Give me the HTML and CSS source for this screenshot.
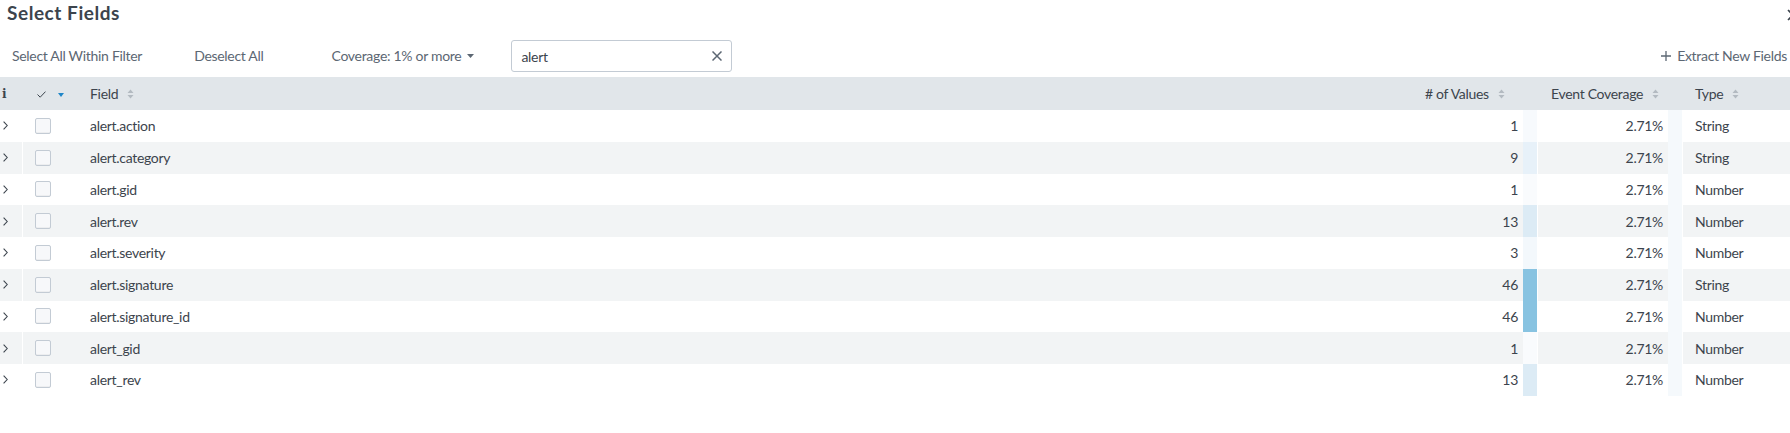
FILE: index.html
```html
<!DOCTYPE html>
<html lang="en">
<head>
<meta charset="utf-8">
<title>Select Fields</title>
<link rel="stylesheet" href="styles.css">
</head>
<body>
<div class="page">
  <div class="title-bar">
    <h1 class="title">Select Fields</h1>
    <button class="close" aria-label="Close">
      <svg width="12" height="12" viewBox="0 0 12 12"><path d="M1 1 L11 11 M11 1 L1 11" stroke="#3c444d" stroke-width="1.6" fill="none"/></svg>
    </button>
  </div>

  <div class="toolbar">
    <button class="tb-btn tb-select">Select All Within Filter</button>
    <button class="tb-btn tb-deselect">Deselect All</button>
    <button class="tb-btn tb-coverage">Coverage: 1% or more<svg class="dd-caret" width="7" height="4" viewBox="0 0 7 4"><path d="M0 0 H7 L3.5 4 Z" fill="#5c6773"/></svg></button>
    <div class="search">
      <span class="search-text">alert</span>
      <svg class="search-clear" width="10" height="10" viewBox="0 0 10 10"><path d="M0.5 0.5 L9.5 9.5 M9.5 0.5 L0.5 9.5" stroke="#5c6773" stroke-width="1.5" fill="none"/></svg>
    </div>
    <button class="tb-btn tb-extract"><svg class="plus" width="10" height="10" viewBox="0 0 10 10"><path d="M5 0 V10 M0 5 H10" stroke="#5c6773" stroke-width="1.3" fill="none"/></svg>Extract New Fields</button>
  </div>

  <div class="table">
    <div class="row head">
      <div class="cell c-info"><span class="info-i">i</span></div>
      <div class="cell c-check"><svg class="chk" width="9" height="7" viewBox="0 0 9 7"><path d="M0.5 3.5 L3.2 6.2 L8.5 0.6" stroke="#3c444d" stroke-width="1" fill="none"/></svg><svg class="blue-caret" width="6" height="4" viewBox="0 0 6 4"><path d="M0 0 H6 L3 4 Z" fill="#1f86c8"/></svg></div>
      <div class="cell c-field">Field<svg class="sort" width="7" height="10" viewBox="0 0 7 10"><path d="M3.5 0.5 L6.5 4 H0.5 Z M0.5 6 H6.5 L3.5 9.5 Z" fill="#b3bac1"/></svg></div>
      <div class="cell h-values">#&nbsp;of Values<svg class="sort" width="7" height="10" viewBox="0 0 7 10"><path d="M3.5 0.5 L6.5 4 H0.5 Z M0.5 6 H6.5 L3.5 9.5 Z" fill="#b3bac1"/></svg></div>
      <div class="cell h-coverage">Event Coverage<svg class="sort" width="7" height="10" viewBox="0 0 7 10"><path d="M3.5 0.5 L6.5 4 H0.5 Z M0.5 6 H6.5 L3.5 9.5 Z" fill="#b3bac1"/></svg></div>
      <div class="cell h-type">Type<svg class="sort" width="7" height="10" viewBox="0 0 7 10"><path d="M3.5 0.5 L6.5 4 H0.5 Z M0.5 6 H6.5 L3.5 9.5 Z" fill="#b3bac1"/></svg></div>
    </div>

    <div class="row">
      <div class="cell c-expand"><svg width="5" height="9" viewBox="0 0 5 9"><path d="M0.6 0.6 L4.2 4.5 L0.6 8.4" stroke="#3c444d" stroke-width="1.1" fill="none"/></svg></div>
      <div class="cell c-check"><span class="checkbox"></span></div>
      <div class="cell c-field">alert.action</div>
      <div class="cell c-num">1</div>
      <div class="cell c-heat" style="background:#f7fafd"></div>
      <div class="cell c-cov">2.71%</div>
      <div class="cell c-heat" style="background:#f5f9fc"></div>
      <div class="cell c-type">String</div>
    </div>
    <div class="row alt">
      <div class="cell c-expand"><svg width="5" height="9" viewBox="0 0 5 9"><path d="M0.6 0.6 L4.2 4.5 L0.6 8.4" stroke="#3c444d" stroke-width="1.1" fill="none"/></svg></div>
      <div class="cell c-check"><span class="checkbox"></span></div>
      <div class="cell c-field">alert.category</div>
      <div class="cell c-num">9</div>
      <div class="cell c-heat" style="background:#e7f1f9"></div>
      <div class="cell c-cov">2.71%</div>
      <div class="cell c-heat" style="background:#f5f9fc"></div>
      <div class="cell c-type">String</div>
    </div>
    <div class="row">
      <div class="cell c-expand"><svg width="5" height="9" viewBox="0 0 5 9"><path d="M0.6 0.6 L4.2 4.5 L0.6 8.4" stroke="#3c444d" stroke-width="1.1" fill="none"/></svg></div>
      <div class="cell c-check"><span class="checkbox"></span></div>
      <div class="cell c-field">alert.gid</div>
      <div class="cell c-num">1</div>
      <div class="cell c-heat" style="background:#f9fbfd"></div>
      <div class="cell c-cov">2.71%</div>
      <div class="cell c-heat" style="background:#f5f9fc"></div>
      <div class="cell c-type">Number</div>
    </div>
    <div class="row alt">
      <div class="cell c-expand"><svg width="5" height="9" viewBox="0 0 5 9"><path d="M0.6 0.6 L4.2 4.5 L0.6 8.4" stroke="#3c444d" stroke-width="1.1" fill="none"/></svg></div>
      <div class="cell c-check"><span class="checkbox"></span></div>
      <div class="cell c-field">alert.rev</div>
      <div class="cell c-num">13</div>
      <div class="cell c-heat" style="background:#dcebf5"></div>
      <div class="cell c-cov">2.71%</div>
      <div class="cell c-heat" style="background:#f5f9fc"></div>
      <div class="cell c-type">Number</div>
    </div>
    <div class="row">
      <div class="cell c-expand"><svg width="5" height="9" viewBox="0 0 5 9"><path d="M0.6 0.6 L4.2 4.5 L0.6 8.4" stroke="#3c444d" stroke-width="1.1" fill="none"/></svg></div>
      <div class="cell c-check"><span class="checkbox"></span></div>
      <div class="cell c-field">alert.severity</div>
      <div class="cell c-num">3</div>
      <div class="cell c-heat" style="background:#f3f8fc"></div>
      <div class="cell c-cov">2.71%</div>
      <div class="cell c-heat" style="background:#f5f9fc"></div>
      <div class="cell c-type">Number</div>
    </div>
    <div class="row alt">
      <div class="cell c-expand"><svg width="5" height="9" viewBox="0 0 5 9"><path d="M0.6 0.6 L4.2 4.5 L0.6 8.4" stroke="#3c444d" stroke-width="1.1" fill="none"/></svg></div>
      <div class="cell c-check"><span class="checkbox"></span></div>
      <div class="cell c-field">alert.signature</div>
      <div class="cell c-num">46</div>
      <div class="cell c-heat" style="background:#88c3e1"></div>
      <div class="cell c-cov">2.71%</div>
      <div class="cell c-heat" style="background:#f5f9fc"></div>
      <div class="cell c-type">String</div>
    </div>
    <div class="row">
      <div class="cell c-expand"><svg width="5" height="9" viewBox="0 0 5 9"><path d="M0.6 0.6 L4.2 4.5 L0.6 8.4" stroke="#3c444d" stroke-width="1.1" fill="none"/></svg></div>
      <div class="cell c-check"><span class="checkbox"></span></div>
      <div class="cell c-field">alert.signature_id</div>
      <div class="cell c-num">46</div>
      <div class="cell c-heat" style="background:#88c3e1"></div>
      <div class="cell c-cov">2.71%</div>
      <div class="cell c-heat" style="background:#f5f9fc"></div>
      <div class="cell c-type">Number</div>
    </div>
    <div class="row alt">
      <div class="cell c-expand"><svg width="5" height="9" viewBox="0 0 5 9"><path d="M0.6 0.6 L4.2 4.5 L0.6 8.4" stroke="#3c444d" stroke-width="1.1" fill="none"/></svg></div>
      <div class="cell c-check"><span class="checkbox"></span></div>
      <div class="cell c-field">alert_gid</div>
      <div class="cell c-num">1</div>
      <div class="cell c-heat" style="background:#f9fbfd"></div>
      <div class="cell c-cov">2.71%</div>
      <div class="cell c-heat" style="background:#f5f9fc"></div>
      <div class="cell c-type">Number</div>
    </div>
    <div class="row">
      <div class="cell c-expand"><svg width="5" height="9" viewBox="0 0 5 9"><path d="M0.6 0.6 L4.2 4.5 L0.6 8.4" stroke="#3c444d" stroke-width="1.1" fill="none"/></svg></div>
      <div class="cell c-check"><span class="checkbox"></span></div>
      <div class="cell c-field">alert_rev</div>
      <div class="cell c-num">13</div>
      <div class="cell c-heat" style="background:#dcebf5"></div>
      <div class="cell c-cov">2.71%</div>
      <div class="cell c-heat" style="background:#f5f9fc"></div>
      <div class="cell c-type">Number</div>
    </div>
  </div>
</div>
</body>
</html>
```

FILE: styles.css
```css
html, body {
  margin: 0;
  padding: 0;
  overflow: hidden;
  background: #ffffff;
}

body {
  font-family: Lato, "Open Sans", "Liberation Sans", sans-serif;
  font-size: 14px;
  letter-spacing: -0.3px;
  color: #3c444d;
}

.page {
  width: 1790px;
}

/* Title */
.title-bar {
  display: flex;
  justify-content: space-between;
  align-items: flex-start;
  height: 25px;
  padding-top: 1px;
}

.title {
  margin: 0 0 0 7px;
  font-size: 19px;
  line-height: 24px;
  font-weight: 700;
  letter-spacing: 0.55px;
  color: #3c444d;
}

.close {
  border: 0;
  background: none;
  padding: 0;
  margin: 8px -10px 0 0;
  width: 13px;
  height: 13px;
  display: flex;
}

/* Toolbar */
.toolbar {
  display: flex;
  align-items: center;
  height: 32px;
  margin-top: 14px;
  padding: 0 3px 0 12px;
}

.tb-btn {
  border: 0;
  background: none;
  padding: 0;
  font: inherit;
  letter-spacing: inherit;
  color: #5c6773;
  line-height: 20px;
  display: flex;
  align-items: center;
  white-space: nowrap;
}

.tb-deselect { margin-left: 52px; }
.tb-coverage { margin-left: 68px; }
.dd-caret { margin-left: 6px; }

.search {
  margin-left: 37px;
  width: 221px;
  height: 32px;
  box-sizing: border-box;
  border: 1px solid #c3cbd4;
  border-radius: 3px;
  display: flex;
  align-items: center;
  justify-content: space-between;
  padding: 0 9px 0 9px;
}

.search-text {
  color: #3c444d;
}

.tb-extract {
  margin-left: auto;
}

.plus { margin-right: 6px; }

/* Table */
.table {
  margin-top: 5px;
}

.row {
  display: grid;
  grid-template-columns: 22px 56px 1fr 110px 14px 131px 14px 108px;
  height: 31.75px;
  background: #ffffff;
}

.row.alt {
  background: #f2f4f5;
}

.row.head {
  height: 33px;
  background: #e1e6ea;
}

.cell {
  display: flex;
  align-items: center;
  white-space: nowrap;
  min-width: 0;
}

.c-info {
  padding-left: 2px;
}

.info-i {
  font-family: "DejaVu Serif", serif;
  font-weight: 700;
  font-size: 12px;
  color: #3c444d;
}

.c-expand {
  padding-left: 3px;
}

.c-check {
  border-left: 1px solid #ffffff;
  padding-left: 12px;
}

.head .c-check {
  border-left-color: transparent;
  padding-left: 14px;
}

.chk { margin-top: 1px; }
.blue-caret { margin-left: 12px; margin-top: 2px; }

.checkbox {
  width: 16px;
  height: 16px;
  box-sizing: border-box;
  border: 1px solid #c3cbd4;
  border-radius: 2px;
  background: #f7f8fa;
  box-shadow: inset 0 -1px 0 rgba(0, 0, 0, 0.04);
}

.c-field {
  padding-left: 12px;
}

.sort {
  margin-left: 9px;
}

.h-values {
  grid-column: span 2;
  padding-left: 12px;
}

.h-coverage {
  grid-column: span 2;
  padding-left: 14px;
}

.h-type {
  padding-left: 13px;
}

.c-num {
  justify-content: flex-end;
  padding-right: 5px;
}

.c-cov {
  justify-content: flex-end;
  padding-right: 5px;
  border-left: 1px solid #ffffff;
}

.c-type {
  padding-left: 12px;
  border-left: 1px solid #ffffff;
}
```
